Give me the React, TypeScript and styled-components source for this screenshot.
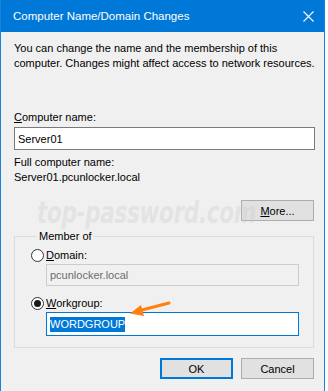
import React from 'react'
import styled, { createGlobalStyle } from 'styled-components'

const GlobalStyle = createGlobalStyle`
  body {
    margin: 0;
    background: #ffffff;
    font-family: "Liberation Sans", Arial, sans-serif;
  }
`

const Window = styled.div`
  position: relative;
  width: 325px;
  height: 391px;
  box-sizing: border-box;
  border-left: 1px solid #1883d7;
  border-right: 1px solid #1883d7;
  background: #f0f0f0;
  display: flex;
  flex-direction: column;
  overflow: hidden;
  font-size: 11px;
  color: #000;
`

const TitleBar = styled.div`
  height: 32px;
  flex-shrink: 0;
  background: #0078d7;
  display: flex;
  align-items: center;
  justify-content: space-between;
  padding: 0 10px 0 12px;
  color: #fff;
  font-size: 11.5px;
`

const Body = styled.div`
  display: flex;
  flex-direction: column;
  padding: 9px 9px 0 13px;
`

const Text = styled.div<{ $gap?: number }>`
  line-height: 15px;
  white-space: nowrap;
  margin-top: ${(p) => p.$gap || 0}px;
`

const Key = styled.span`
  text-decoration: underline;
`

const TextBox = styled.div<{ $disabled?: boolean; $focused?: boolean }>`
  height: 23px;
  box-sizing: border-box;
  display: flex;
  align-items: center;
  padding-left: 3px;
  background: ${(p) => (p.$disabled ? '#f0f0f0' : '#fff')};
  border: 1px solid ${(p) => (p.$focused ? '#0078d7' : p.$disabled ? '#cccccc' : '#7a7a7a')};
  color: ${(p) => (p.$disabled ? '#6d6d6d' : '#000')};
`

const Selected = styled.span`
  background: #0078d7;
  color: #fff;
  line-height: 15px;
`

const ButtonRow = styled.div<{ $gap: number }>`
  display: flex;
  justify-content: flex-end;
  gap: 8px;
  margin-top: ${(p) => p.$gap}px;
  padding-right: 1px;
`

const Button = styled.div<{ $default?: boolean }>`
  width: 73px;
  height: 21px;
  box-sizing: border-box;
  display: flex;
  align-items: center;
  justify-content: center;
  background: #e1e1e1;
  border: ${(p) => (p.$default ? '2px solid #0078d7' : '1px solid #adadad')};
`

const Group = styled.fieldset`
  margin: 8px 0 0 0;
  width: 300px;
  box-sizing: border-box;
  border: 1px solid #dcdcdc;
  padding: 4px 14px 11px 16px;
  min-width: 0;
`

const Legend = styled.legend`
  padding: 0 2px;
  margin-left: 6px;
  line-height: 15px;
`

const RadioRow = styled.div<{ $gap: number }>`
  display: flex;
  align-items: center;
  gap: 2px;
  margin-top: ${(p) => p.$gap}px;
  line-height: 15px;
`

const Radio = styled.span<{ $checked?: boolean }>`
  width: 13px;
  height: 13px;
  box-sizing: border-box;
  border-radius: 50%;
  border: 1px solid #333;
  background: #fff;
  display: flex;
  align-items: center;
  justify-content: center;
  &::after {
    content: '';
    width: 7px;
    height: 7px;
    border-radius: 50%;
    background: ${(p) => (p.$checked ? '#1a1a1a' : 'transparent')};
  }
`

const Indented = styled.div<{ $gap: number }>`
  margin-left: 15px;
  margin-top: ${(p) => p.$gap}px;
`

const Watermark = styled.div`
  position: absolute;
  left: 36px;
  top: 200px;
  line-height: 26px;
  white-space: nowrap;
  font-family: "DejaVu Sans", sans-serif;
  font-weight: bold;
  font-style: italic;
  font-size: 30px;
  letter-spacing: -0.5px;
  transform: scaleX(0.72);
  transform-origin: left center;
  color: rgba(200, 200, 200, 0.32);
  pointer-events: none;
`

const Arrow = styled.svg`
  position: absolute;
  left: 0;
  top: 0;
  pointer-events: none;
`

const App: React.FC = () => {
  return (
    <Window>
      <GlobalStyle />
      <TitleBar>
        <span>Computer Name/Domain Changes</span>
        <svg width="11" height="11" viewBox="0 0 11 11">
          <path d="M0.5 0.5 L10.5 10.5 M10.5 0.5 L0.5 10.5" stroke="#fff" strokeWidth="1.1" />
        </svg>
      </TitleBar>
      <Body>
        <Text>You can change the name and the membership of this</Text>
        <Text>computer. Changes might affect access to network resources.</Text>
        <Text $gap={39}>
          <Key>C</Key>omputer name:
        </Text>
        <TextBox style={{ width: 301, marginTop: 2 }}>Server01</TextBox>
        <Text $gap={5}>Full computer name:</Text>
        <Text>Server01.pcunlocker.local</Text>
        <ButtonRow $gap={15}>
          <Button>
            <span>
              <Key>M</Key>ore...
            </span>
          </Button>
        </ButtonRow>
        <Group>
          <Legend>Member of</Legend>
          <RadioRow $gap={0}>
            <Radio />
            <span>
              <Key>D</Key>omain:
            </span>
          </RadioRow>
          <Indented $gap={1}>
            <TextBox $disabled style={{ height: 22 }}>pcunlocker.local</TextBox>
          </Indented>
          <RadioRow $gap={10}>
            <Radio $checked />
            <span>
              <Key>W</Key>orkgroup:
            </span>
          </RadioRow>
          <Indented $gap={1}>
            <TextBox $focused style={{ height: 24 }}>
              <Selected>WORDGROUP</Selected>
            </TextBox>
          </Indented>
        </Group>
        <ButtonRow $gap={10}>
          <Button $default>OK</Button>
          <Button>Cancel</Button>
        </ButtonRow>
      </Body>
      <Watermark>top-password.com</Watermark>
      <Arrow width="325" height="391">
        <path d="M168 303 L137 311" stroke="#ff7f0f" strokeWidth="3" strokeLinecap="round" />
        <path d="M129 313.5 L140 305 L143 316 Z" fill="#ff7f0f" />
      </Arrow>
    </Window>
  )
}

export default App
